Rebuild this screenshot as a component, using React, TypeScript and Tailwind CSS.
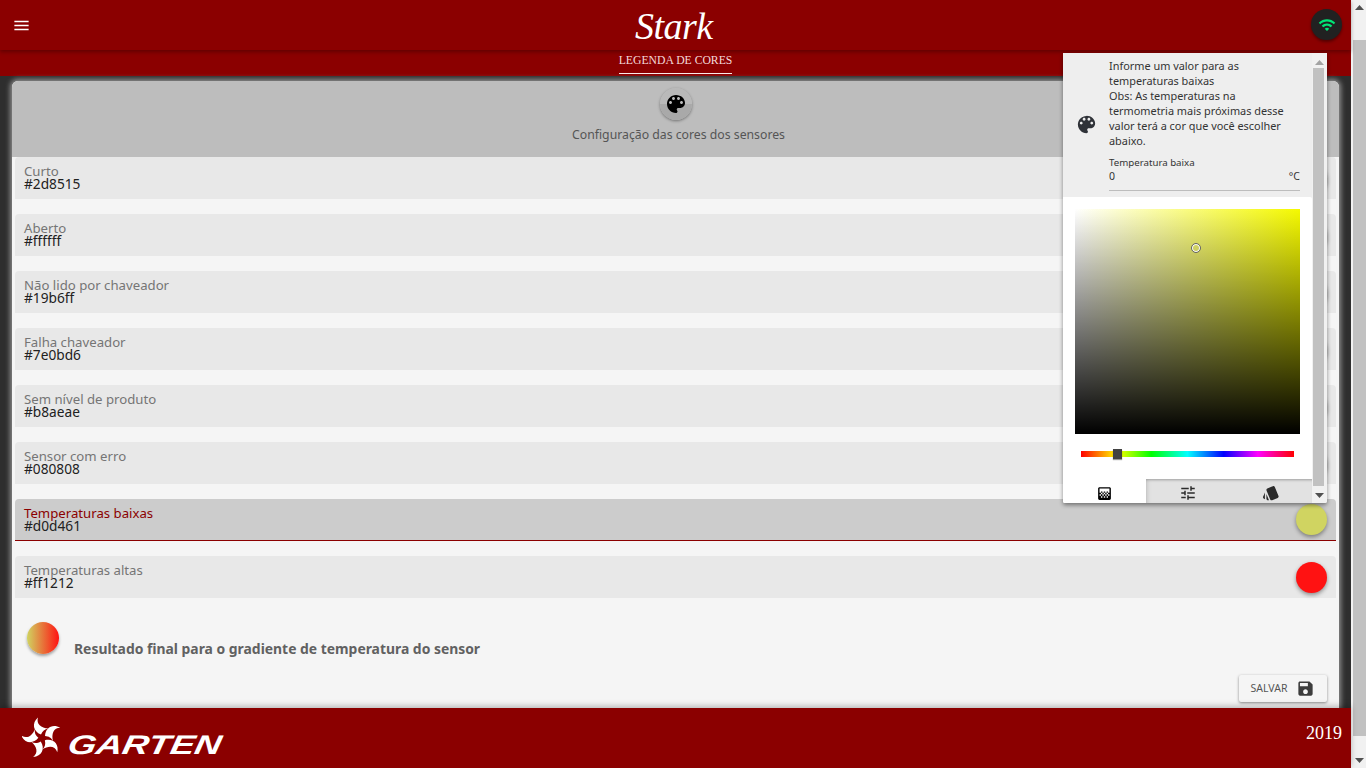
const sensores = [
    { nome: "Curto", cor: "#2d8515" },
    { nome: "Aberto", cor: "#ffffff" },
    { nome: "Não lido por chaveador", cor: "#19b6ff" },
    { nome: "Falha chaveador", cor: "#7e0bd6" },
    { nome: "Sem nível de produto", cor: "#b8aeae" },
    { nome: "Sensor com erro", cor: "#080808" },
    { nome: "Temperaturas baixas", cor: "#d0d461", ativo: true },
    { nome: "Temperaturas altas", cor: "#ff1212" },
];

const Icon = ({ d, size = 24, className = "" }: { d: string; size?: number; className?: string }) => (
    <svg width={size} height={size} viewBox="0 0 24 24" fill="currentColor" className={className}>
        <path d={d} />
    </svg>
);

const paletteIcon = "M12 3c-4.97 0-9 4.03-9 9s4.03 9 9 9c.83 0 1.5-.67 1.5-1.5 0-.39-.15-.74-.39-1.01-.24-.27-.39-.62-.39-1 0-.83.67-1.5 1.5-1.5H16c2.76 0 5-2.24 5-5 0-4.42-4.03-8-9-8zm-5.5 9c-.83 0-1.5-.67-1.5-1.5S5.67 9 6.5 9 8 9.67 8 10.5 7.33 12 6.5 12zm3-4C8.67 8 8 7.33 8 6.5S8.67 5 9.5 5s1.5.67 1.5 1.5S10.33 8 9.5 8zm5 0c-.83 0-1.5-.67-1.5-1.5S13.67 5 14.5 5s1.5.67 1.5 1.5S15.33 8 14.5 8zm3 4c-.83 0-1.5-.67-1.5-1.5S16.67 9 17.5 9s1.5.67 1.5 1.5-.67 1.5-1.5 1.5z";
const menuIcon = "M3 18h18v-2H3v2zm0-5h18v-2H3v2zm0-7v2h18V6H3z";
const wifiIcon = "M1 9l2 2c4.97-4.97 13.03-4.97 18 0l2-2C16.93 2.93 7.08 2.93 1 9zm8 8l3 3 3-3c-1.65-1.66-4.34-1.66-6 0zm-4-4l2 2c2.76-2.76 7.24-2.76 10 0l2-2C15.14 9.14 8.87 9.14 5 13z";
const saveIcon = "M17 3H5c-1.11 0-2 .9-2 2v14c0 1.1.89 2 2 2h14c1.1 0 2-.9 2-2V7l-4-4zm-5 16c-1.66 0-3-1.34-3-3s1.34-3 3-3 3 1.34 3 3-1.34 3-3 3zm3-10H5V5h10v4z";
const tuneIcon = "M3 17v2h6v-2H3zM3 5v2h10V5H3zm10 16v-2h8v-2h-8v-2h-2v6h2zM7 9v2H3v2h4v2h2V9H7zm14 4v-2H11v2h10zm-6-4h2V7h4V5h-4V3h-2v6z";
const gradientIcon = "M11 9h2v2h-2zm-2 2h2v2H9zm4 0h2v2h-2zm2-2h2v2h-2zM7 9h2v2H7zm12-6H5c-1.1 0-2 .9-2 2v14c0 1.1.9 2 2 2h14c1.1 0 2-.9 2-2V5c0-1.1-.9-2-2-2zM9 18H7v-2h2v2zm4 0h-2v-2h2v2zm4 0h-2v-2h2v2zm2-7h-2v2h2v2h-2v-2h-2v2h-2v-2h-2v2H9v-2H7v2H5v-2h2v-2H5V5h14v6z";
const swatchIcon = "M2.53 19.65l1.34.56v-9.03l-2.43 5.86c-.41 1.02.08 2.19 1.09 2.61zm19.5-3.7L17.07 3.98c-.31-.75-1.04-1.21-1.81-1.23-.26 0-.53.04-.79.15L7.1 5.95c-.75.31-1.21 1.03-1.23 1.8-.01.27.04.54.15.8l4.96 11.97c.31.76 1.05 1.22 1.83 1.23.26 0 .52-.05.77-.15l7.36-3.05c1.02-.42 1.51-1.59 1.09-2.6zM5.88 19.75c0 1.1.9 2 2 2h1.45l-3.45-8.34v6.34z";

const Seta = ({ baixo = false, className = "" }: { baixo?: boolean; className?: string }) => (
    <svg width="9" height="5" viewBox="0 0 9 5" fill="currentColor" className={className}>
        <polygon points={baixo ? "0,0 9,0 4.5,5" : "0,5 9,5 4.5,0"} />
    </svg>
);

// pinwheel do logo
const LogoGarten = () => (
    <svg width="40" height="42" viewBox="-20 -21 40 42" fill="#fff" className="shrink-0">
        {[0, 72, 144, 216, 288].map((r) => (
            <path
                key={r}
                transform={`rotate(${r})`}
                d="M-1 -3.5 C-9 -6.5 -10.5 -15 -4 -20.5 C-6 -14 -1 -10 6.5 -9.5 C2.5 -9 .5 -7 -1 -3.5 Z"
            />
        ))}
    </svg>
);

const Popover = () => (
    <div className="absolute top-[53px] right-[24px] z-20 w-[264px] h-[450px] flex bg-[#eeeeee] shadow-[0_2px_4px_rgba(0,0,0,0.45)] rounded-b-[2px] overflow-hidden">
        <div className="w-[249px] flex flex-col">
            <div className="h-[144px] flex text-[#333]">
                <div className="w-[46px] pl-[12px] pb-[2px] flex items-center">
                    <Icon d={paletteIcon} size={23} className="text-[#2f3238]" />
                </div>
                <div className="flex-1 pt-[5px] pr-[12px]">
                    <p className="text-[10.9px] leading-[15px]">
                        Informe um valor para as temperaturas baixas
                        <br />
                        Obs: As temperaturas na termometria mais próximas desse valor terá a cor que você escolher abaixo.
                    </p>
                    <div className="mt-[8px] border-b border-[#bdbdbd] h-[35px]">
                        <p className="text-[9.7px] leading-[13px]">Temperatura baixa</p>
                        <div className="flex justify-between text-[10.5px] leading-[14px]">
                            <span>0</span>
                            <span>°C</span>
                        </div>
                    </div>
                </div>
            </div>
            <div className="flex-1 bg-white rounded-tr-[2px] flex flex-col">
                <div className="pt-[12px] pl-[12px]">
                    <div className="relative w-[225px] h-[225px] bg-[linear-gradient(to_top,#000,transparent),linear-gradient(to_right,#fff,#f5f900)]">
                        <div className="absolute left-[116px] top-[34px] w-[10px] h-[10px] rounded-full border border-[#666] shadow-[inset_0_0_0_1px_#fff]" />
                    </div>
                </div>
                <div className="pl-[18px] pt-[17px] h-[45px]">
                    <div className="relative w-[213px] h-[6px] bg-[linear-gradient(to_right,#f00,#ff0_17%,#0f0_33%,#0ff_50%,#00f_67%,#f0f_83%,#f00)]">
                        <div className="absolute left-[32px] -top-[2px] w-[9px] h-[10px] bg-[#424242] shadow-[0_1px_1px_rgba(0,0,0,0.4)]" />
                    </div>
                </div>
                <div className="flex-1 flex">
                    <div className="w-[83px] bg-white text-black flex items-center justify-center pt-[4px]">
                        <Icon d={gradientIcon} size={17} />
                    </div>
                    <div className="flex-1 flex bg-[#e2e2e2] text-[#2b2b2b] shadow-[inset_0_3px_3px_-2px_#9e9e9e,inset_4px_0_4px_-3px_#bdbdbd]">
                        <div className="flex-1 flex items-center justify-center pt-[4px]">
                            <Icon d={tuneIcon} size={18} />
                        </div>
                        <div className="flex-1 flex items-center justify-center pt-[4px]">
                            <Icon d={swatchIcon} size={18} />
                        </div>
                    </div>
                </div>
            </div>
        </div>
        <div className="w-[15px] flex flex-col items-center bg-[#f1f1f1]">
            <div className="h-[15px] flex items-center justify-center pt-[4px]"><Seta className="text-[#a3a3a3]" /></div>
            <div className="w-[11px] -ml-[2px] flex-1 mb-[2px] bg-[#c1c1c1]" />
            <div className="h-[15px] flex items-center justify-center"><Seta baixo className="text-[#505050]" /></div>
        </div>
    </div>
);

const App = () => {
    return (
        <div className="flex h-screen w-full overflow-hidden font-['Noto_Sans',sans-serif]">
            <div className="relative flex-1 min-w-0 flex flex-col">
                <header className="relative z-10 h-[50px] bg-[#8b0000] shadow-[0_2px_4px_rgba(0,0,0,0.3)] flex items-center justify-between pl-[12px] pr-[9px]">
                    <Icon d={menuIcon} size={19} className="text-white" />
                    <span className="absolute left-[635px] top-[4px] font-['Liberation_Serif',serif] italic text-white text-[38px] leading-[44px] tracking-[-0.5px]">Stark</span>
                    <div className="w-[31px] h-[31px] -mt-px rounded-full bg-[#212121] shadow-[0_2px_3px_rgba(0,0,0,0.4)] flex items-center justify-center">
                        <Icon d={wifiIcon} size={18} className="text-[#00e676]" />
                    </div>
                </header>
                <div className="h-[26px] bg-[#8b0000] flex justify-center">
                    <div className="h-[24px] pt-[3px] border-b border-[#fbeaea] font-['Liberation_Serif',serif] text-[11.7px] leading-[16px] text-[#f3dada]">LEGENDA DE CORES</div>
                </div>
                <main className="flex-1 min-h-0 bg-[#2e2e2e] px-[12px] pt-[5px]">
                    <div className="h-full bg-[#f5f5f5] rounded-t-[6px] shadow-[0_0_5px_2px_#8f8f8f] overflow-hidden flex flex-col">
                        <div className="h-[76px] shrink-0 bg-[#bdbdbd] flex flex-col items-center pt-[7px]">
                            <div className="w-[32px] h-[32px] rounded-full bg-[linear-gradient(#b9b9b9_50%,#a9a9a9_50%)] shadow-[0_1px_3px_rgba(0,0,0,0.4)] flex items-center justify-center">
                                <Icon d={paletteIcon} size={24} className="text-black" />
                            </div>
                            <p className="mt-[6px] ml-[6px] text-[12.25px] leading-[17px] text-[#555]">Configuração das cores dos sensores</p>
                        </div>
                        <div className="px-[3px] flex flex-col gap-[15px]">
                            {sensores.map((s) => (
                                <div
                                    key={s.nome}
                                    className={`h-[42px] rounded-t-[4px] flex items-center justify-between pl-[9px] pr-[9px] ${s.ativo ? "bg-[#cccccc] border-b border-[#8b0000]" : "bg-[#e8e8e8]"}`}
                                >
                                    <div className="self-start pt-[8px]">
                                        <p className={`text-[13.2px] leading-[13px] ${s.ativo ? "text-[#8b0000]" : "text-[#757575]"}`}>{s.nome}</p>
                                        <p className="text-[13.7px] leading-[12px] text-[#212121]">{s.cor}</p>
                                    </div>
                                    <div
                                        className="w-[31px] h-[31px] rounded-full shadow-[0_2px_4px_rgba(0,0,0,0.4)]"
                                        style={{ backgroundColor: s.cor }}
                                    />
                                </div>
                            ))}
                        </div>
                        <div className="flex pl-[15px] pt-[24px]">
                            <div className="w-[32px] h-[32px] rounded-full bg-[linear-gradient(to_right,#d0d461,#ff1212)] shadow-[0_2px_3px_rgba(0,0,0,0.35)]" />
                            <p className="ml-[15px] mt-[18px] text-[13.9px] leading-[18px] font-bold text-[#616161]">Resultado final para o gradiente de temperatura do sensor</p>
                        </div>
                        <div className="flex justify-end pr-[12px] pt-[17px]">
                            <button className="w-[88px] h-[27px] bg-[#f5f5f5] rounded-[2px] shadow-[0_1px_3px_rgba(0,0,0,0.45)] flex items-center justify-center gap-[9px] text-[10.5px] text-[#555]">
                                SALVAR
                                <Icon d={saveIcon} size={19} className="text-[#3d3d3d]" />
                            </button>
                        </div>
                    </div>
                </main>
                <footer className="h-[60px] bg-[#8b0000] flex items-center justify-between pl-[22px] pr-[9px] relative z-10 shadow-[0_-2px_6px_rgba(0,0,0,0.25)]">
                    <div className="flex items-center gap-[6px]">
                        <LogoGarten />
                        <span className="font-['Liberation_Sans',sans-serif] font-bold italic text-white text-[27px] leading-[27px] mt-[14px] origin-left scale-x-[1.35] -skew-x-[8deg]">GARTEN</span>
                    </div>
                    <span className="font-['Liberation_Serif',serif] text-white text-[18px] -mt-[10px]">2019</span>
                </footer>
                <Popover />
            </div>
            <div className="w-[15px] shrink-0 bg-[#f1f1f1] flex flex-col">
                <div className="h-[15px] flex items-center justify-center pl-[2px]"><Seta className="text-[#505050]" /></div>
                <div className="flex-1 mt-[25px] mb-[17px] ml-[2px] bg-[#c1c1c1]" />
                <div className="h-[15px] flex items-center justify-center pl-[2px]"><Seta baixo className="text-[#505050]" /></div>
            </div>
        </div>
    );
};

export default App;
